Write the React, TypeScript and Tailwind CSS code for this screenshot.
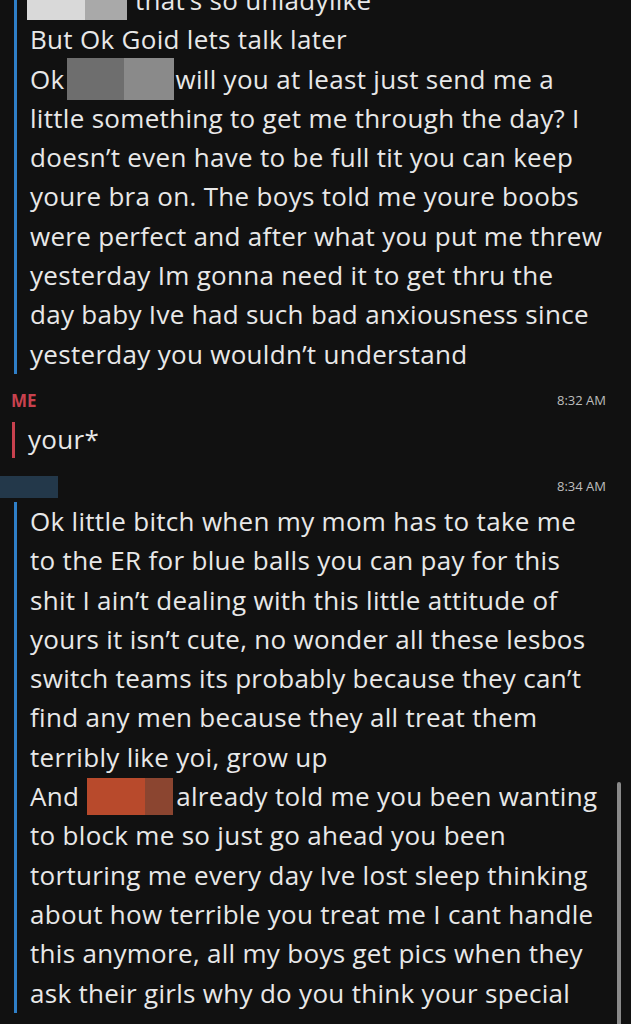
import React from 'react'

const first = [
  'But Ok Goid lets talk later',
  null,
  'little something to get me through the day? I',
  'doesn’t even have to be full tit you can keep',
  'youre bra on. The boys told me youre boobs',
  'were perfect and after what you put me threw',
  'yesterday Im gonna need it to get thru the',
  'day baby Ive had such bad anxiousness since',
  'yesterday you wouldn’t understand',
]

const second = [
  'Ok little bitch when my mom has to take me',
  'to the ER for blue balls you can pay for this',
  'shit I ain’t dealing with this little attitude of',
  'yours it isn’t cute, no wonder all these lesbos',
  'switch teams its probably because they can’t',
  'find any men because they all treat them',
  'terribly like yoi, grow up',
  null,
  'to block me so just go ahead you been',
  'torturing me every day Ive lost sleep thinking',
  'about how terrible you treat me I cant handle',
  'this anymore, all my boys get pics when they',
  'ask their girls why do you think your special',
]

function Line({ children }: { children: React.ReactNode }) {
  return <div className="h-[39.3px] leading-[39.3px] whitespace-nowrap flex items-center">{children}</div>
}

export default function App() {
  return (
    <div
      className="relative w-[631px] h-[1024px] overflow-hidden bg-[#111111] text-[#e8e8e8] text-[26px] font-medium tracking-[0.3px]"
      style={{ fontFamily: '"Open Sans", Lato, sans-serif' }}
    >
      <div className="-mt-[19px] ml-[14px] border-l-[3px] border-[#2f7fc8] pl-[13px]">
        <Line>
          <span className="inline-block w-[58px] h-[20px] bg-[#d9d9d9] -ml-[3px] self-start mt-[19px]" />
          <span className="inline-block w-[42px] h-[20px] bg-[#a9a9a9] self-start mt-[19px]" />
          <span className="ml-[8px]">that’s so unladylike</span>
        </Line>
        {first.map((t, i) =>
          t ? (
            <Line key={i}>{t}</Line>
          ) : (
            <Line key={i}>
              <span>Ok</span>
              <span className="inline-block w-[57px] h-[42px] bg-[#6e6e6e] ml-[3px]" />
              <span className="inline-block w-[50px] h-[42px] bg-[#8a8a8a]" />
              <span className="ml-[1px]">will you at least just send me a</span>
            </Line>
          )
        )}
      </div>

      <div className="mt-[18px] flex justify-between items-center pl-[11px] pr-[25px] h-[18px]">
        <span className="text-[#c8414e] font-bold text-[17px] tracking-normal">ME</span>
        <span className="text-[#bdbdbd] text-[13px] font-normal tracking-normal">8:32 AM</span>
      </div>
      <div className="mt-[12px] ml-[12px] border-l-[3px] border-[#c8414e] pl-[13px] h-[36px] flex items-center">
        your*
      </div>

      <div className="mt-[18px] flex justify-between items-center pr-[25px] h-[22px]">
        <span className="w-[58px] h-[22px] bg-[#23384a]" />
        <span className="text-[#bdbdbd] text-[13px] font-normal tracking-normal">8:34 AM</span>
      </div>
      <div className="mt-[4px] ml-[14px] border-l-[3px] border-[#2f7fc8] pl-[13px]">
        {second.map((t, i) =>
          t ? (
            <Line key={i}>{t}</Line>
          ) : (
            <Line key={i}>
              <span>And</span>
              <span className="inline-block w-[58px] h-[37px] bg-[#b84a2c] ml-[8px]" />
              <span className="inline-block w-[28px] h-[37px] bg-[#8b4530]" />
              <span className="ml-[3px]">already told me you been wanting</span>
            </Line>
          )
        )}
      </div>

      <div className="absolute right-[10px] top-[782px] w-[4px] h-[250px] rounded-full bg-[#8a8a8a]" />
    </div>
  )
}
